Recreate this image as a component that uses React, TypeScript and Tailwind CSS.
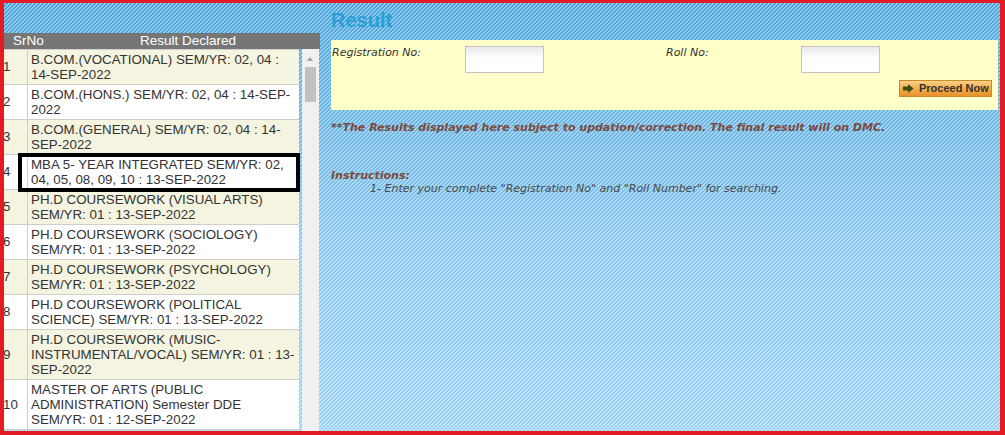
import React from "react";

const rows = [
  "B.COM.(VOCATIONAL) SEM/YR: 02, 04 : 14-SEP-2022",
  "B.COM.(HONS.) SEM/YR: 02, 04 : 14-SEP-2022",
  "B.COM.(GENERAL) SEM/YR: 02, 04 : 14-SEP-2022",
  "MBA 5- YEAR INTEGRATED SEM/YR: 02, 04, 05, 08, 09, 10 : 13-SEP-2022",
  "PH.D COURSEWORK (VISUAL ARTS) SEM/YR: 01 : 13-SEP-2022",
  "PH.D COURSEWORK (SOCIOLOGY) SEM/YR: 01 : 13-SEP-2022",
  "PH.D COURSEWORK (PSYCHOLOGY) SEM/YR: 01 : 13-SEP-2022",
  "PH.D COURSEWORK (POLITICAL SCIENCE) SEM/YR: 01 : 13-SEP-2022",
  "PH.D COURSEWORK (MUSIC-INSTRUMENTAL/VOCAL) SEM/YR: 01 : 13-SEP-2022",
  "MASTER OF ARTS (PUBLIC ADMINISTRATION) Semester DDE SEM/YR: 01 : 12-SEP-2022",
];

function Input() {
  return (
    <div className="h-[27px] w-[79px] border border-[#c4c4c4] bg-[linear-gradient(180deg,#e9e9e9_0%,#ffffff_45%,#ffffff_100%)]" />
  );
}

export default function App() {
  return (
    <div className="relative w-[1005px] h-[435px] overflow-hidden bg-[image:repeating-linear-gradient(135deg,rgba(255,255,255,0.42)_0px,rgba(255,255,255,0.42)_1.414px,transparent_1.414px,transparent_2.828px),linear-gradient(180deg,#44a2da_0%,#86c6ef_55%,#9ad1f5_100%)] font-['Liberation_Sans',Arial,sans-serif]">
      <div className="flex h-full">
        {/* Left panel */}
        <div className="w-[320px] shrink-0 pt-[33px] flex flex-col">
          <div className="h-[16px] bg-[#767676] text-white text-[13.5px] leading-[16px] flex">
            <span className="w-[140px] pl-[13px]">SrNo</span>
            <span>Result Declared</span>
          </div>
          <div className="flex flex-1 min-h-0">
            <div className="w-[299px] border-t border-[#cfcfcf] overflow-hidden">
              {rows.map((r, i) => (
                <div
                  key={i}
                  className={`flex border-b border-[#cfcfc4] ${i % 2 === 0 ? "bg-[#f4f4e0]" : "bg-white"}`}
                >
                  <div className="w-[28px] shrink-0 border-r border-[#cfcfc4] pl-[3px] flex items-center text-[13.33px] text-[#333]">
                    {i + 1}
                  </div>
                  <div className="flex-1 pl-[3px] pr-[3px] pt-[2px] pb-[2px] text-[13.33px] leading-[15px] text-[#333]">
                    {r}
                  </div>
                </div>
              ))}
            </div>
            <div className="ml-[3px] w-[17px] bg-[#f0f0f0] relative">
              <div className="absolute left-[5px] top-[8px] w-0 h-0 border-l-[3.5px] border-r-[3.5px] border-b-[4px] border-l-transparent border-r-transparent border-b-[#a3a3a3]" />
              <div className="absolute left-[3px] top-[18px] w-[11px] h-[35px] bg-[#c1c1c1]" />
            </div>
          </div>
        </div>

        {/* Right panel */}
        <div className="ml-[11px] w-[667px] pt-[8px]">
          <div className="h-[24px] leading-[24px] text-[20px] font-bold text-[#2a9fd8]">Result</div>
          <div className="mt-[8px] h-[70px] bg-[#ffffc9] pt-[6px] pl-[1px] pr-[6px] font-['DejaVu_Sans',Verdana,sans-serif]">
            <div className="grid grid-cols-[133px_201px_135px_1fr] items-start">
              <div className="text-[11px] leading-[14px] italic text-[#333]">Registration No:</div>
              <Input />
              <div className="text-[11px] leading-[14px] italic text-[#333]">Roll No:</div>
              <Input />
            </div>
            <div className="mt-[7px] flex justify-end">
              <div className="h-[17px] w-[93px] border border-[#c98a2c] bg-[linear-gradient(180deg,#fbd08a_0%,#f3ad4c_50%,#e6922a_100%)] flex items-center pl-[3px] gap-[5px] font-['Liberation_Sans',Arial,sans-serif] text-[11px] font-bold text-[#333]">
                <svg width="11" height="9" viewBox="0 0 11 9">
                  <polygon points="0,2.5 5,2.5 5,0 10.5,4.5 5,9 5,6.5 0,6.5" fill="#3e4f0c" />
                </svg>
                <span>Proceed Now</span>
              </div>
            </div>
          </div>
          <div className="mt-[11px] text-[11px] leading-[14px] font-bold italic text-[#7d4a3c] font-['DejaVu_Sans',Verdana,sans-serif]">
            **The Results displayed here subject to updation/correction. The final result will on DMC.
          </div>
          <div className="mt-[34px] text-[11px] leading-[13px] italic font-['DejaVu_Sans',Verdana,sans-serif]">
            <div className="font-bold text-[#7d4a3c]">Instructions:</div>
            <div className="pl-[39px] text-[#4a4a4a]">
              1- Enter your complete "Registration No" and "Roll Number" for searching.
            </div>
          </div>
        </div>
      </div>

      {/* Highlight box */}
      <div className="absolute left-[18px] top-[153px] w-[282px] h-[39px] border-[4px] border-black pointer-events-none" />
      {/* Red frame */}
      <div className="absolute inset-0 border-t-[3px] border-l-[4px] border-r-[5px] border-b-[4px] border-[#e31b23] pointer-events-none" />
    </div>
  );
}
